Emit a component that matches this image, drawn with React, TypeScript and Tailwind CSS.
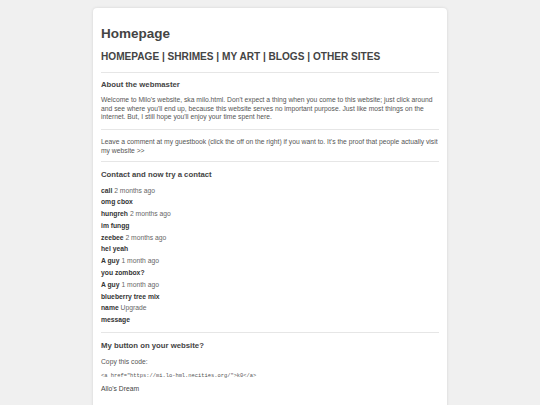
import React from 'react';

interface Entry {
  name: string;
  time?: string;
}

const entries: Entry[] = [
  { name: 'call', time: '2 months ago' },
  { name: 'omg cbox' },
  { name: 'hungreh', time: '2 months ago' },
  { name: 'im fungg' },
  { name: 'zeebee', time: '2 months ago' },
  { name: 'hel yeah' },
  { name: 'A guy', time: '1 month ago' },
  { name: 'you zombox?' },
  { name: 'A guy', time: '1 month ago' },
  { name: 'blueberry tree mix' },
  { name: 'name', time: 'Upgrade' },
  { name: 'message' },
];

export default function App() {
  return (
    <div className="min-h-screen bg-[#f0f0f0] pt-[8px] [font-family:'Liberation_Sans',Arial,sans-serif] text-[#444]">
      <div className="mx-auto w-[354px] h-[420px] bg-white rounded-[4px] shadow-[0_0_3px_rgba(0,0,0,0.12)] px-[8px] pt-[16px]">
        <h1 className="text-[13.5px] font-bold leading-[20px]">Homepage</h1>
        <nav className="mt-[6px] text-[10.1px] font-bold leading-[14px]">
          HOMEPAGE | SHRIMES | MY ART | BLOGS | OTHER SITES
        </nav>
        <hr className="mt-[7.5px] border-t border-[#e6e6e6]" />

        <h2 className="mt-[7.5px] text-[7.75px] font-bold leading-[10px]">About the webmaster</h2>
        <p className="mt-[6px] text-[6.75px] leading-[8.5px] text-[#555]">
          Welcome to Milo's website, ska milo.html. Don't expect a thing when you come to this website; just click around
          and see where you'll end up, because this website serves no important purpose. Just like most things on the
          internet. But, I still hope you'll enjoy your time spent here.
        </p>
        <hr className="mt-[7.5px] border-t border-[#e6e6e6]" />
        <p className="mt-[8px] text-[6.75px] leading-[8.5px] text-[#555]">
          Leave a comment at my guestbook (click the off on the right) if you want to. It's the proof that people actually visit
          my website &gt;&gt;
        </p>
        <hr className="mt-[6px] border-t border-[#e6e6e6]" />

        <h2 className="mt-[8px] text-[7.75px] font-bold leading-[10px]">Contact and now try a contact</h2>
        <ul className="mt-[6.5px] flex flex-col gap-[3.3px]">
          {entries.map((e, i) => (
            <li key={i} className="text-[6.75px] leading-[8.5px]">
              <span className="font-bold text-[#333]">{e.name}</span>
              {e.time && <span className="text-[#666]"> {e.time}</span>}
            </li>
          ))}
        </ul>
        <hr className="mt-[7.5px] border-t border-[#e6e6e6]" />

        <h2 className="mt-[8px] text-[7.75px] font-bold leading-[10px]">My button on your website?</h2>
        <p className="mt-[6.5px] text-[6.75px] leading-[8.5px] text-[#555]">Copy this code:</p>
        <code className="mt-[6.5px] block [font-family:'Liberation_Mono',monospace] text-[5.4px] leading-[7px] text-[#555]">
          &lt;a href="https://mi.lo-hml.necities.org/"&gt;k0&lt;/a&gt;
        </code>
        <p className="mt-[5px] text-[6.75px] leading-[8.5px] text-[#444]">Allo's Dream</p>
      </div>
    </div>
  );
}
